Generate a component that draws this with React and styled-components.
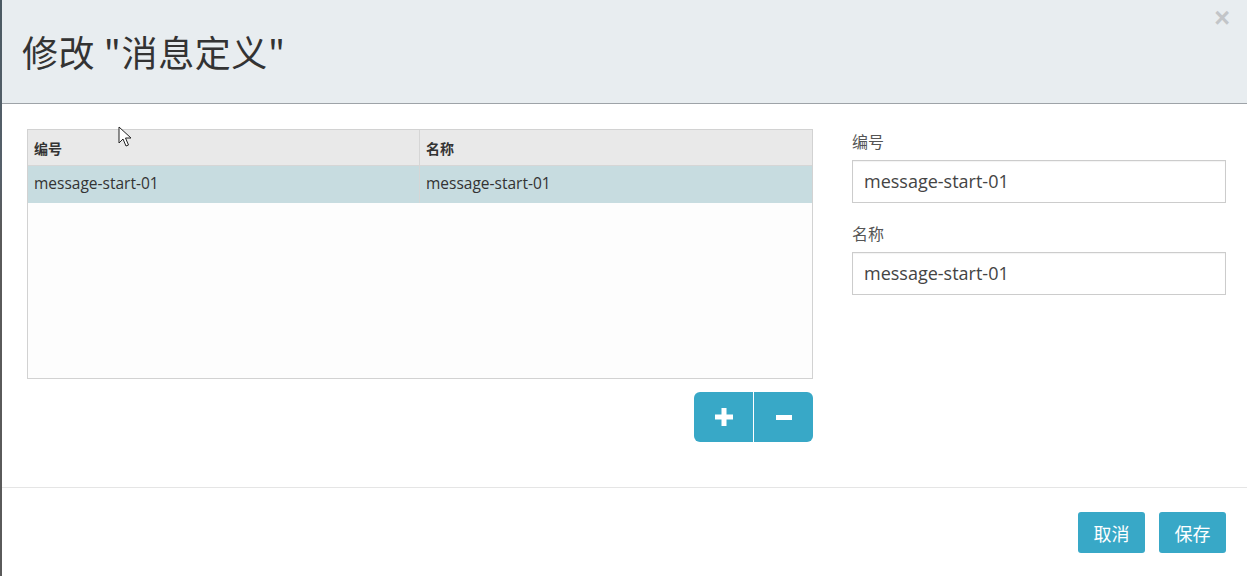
import React from 'react'
import styled, { createGlobalStyle } from 'styled-components'

const GlobalStyle = createGlobalStyle`
  html, body {
    margin: 0;
    padding: 0;
    background: #ffffff;
    overflow: hidden;
  }
  body {
    font-family: "Open Sans", "Noto Sans CJK SC", sans-serif;
  }
`

const Screen = styled.div`
  display: flex;
  width: 1247px;
  height: 576px;
  position: relative;
`

const Backdrop = styled.div`
  width: 2px;
  background: linear-gradient(#4b5a63 0%, #56606a 30%, #5a5a5a 40%);
`

const Modal = styled.div`
  flex: 1;
  display: flex;
  flex-direction: column;
  background: #ffffff;
`

const Header = styled.div`
  height: 104px;
  box-sizing: border-box;
  background: #e8edf0;
  border-bottom: 1px solid #9ea3a8;
  display: flex;
  justify-content: space-between;
  padding: 0 17px 0 20px;
`

const Title = styled.h1`
  margin: 0;
  align-self: center;
  font-family: "Noto Sans CJK SC", "Open Sans", sans-serif;
  font-weight: 400;
  font-size: 36px;
  letter-spacing: 0.6px;
  color: #333333;
  line-height: 1;
  padding-bottom: 2px;
`

const Close = styled.span`
  font-family: "Liberation Sans", sans-serif;
  font-size: 27px;
  font-weight: 700;
  color: #c2c5c8;
  line-height: 1;
  padding-top: 5px;
`

const Body = styled.div`
  height: 384px;
  box-sizing: border-box;
  padding: 25px 20px 0 25px;
  display: grid;
  grid-template-columns: 786px 374px;
  column-gap: 39px;
  align-items: start;
  border-bottom: 1px solid #e5e5e5;
`

const LeftCol = styled.div`
  display: flex;
  flex-direction: column;
`

const Grid = styled.div`
  height: 250px;
  box-sizing: border-box;
  border: 1px solid #d2d2d2;
  background: #fdfdfd;
`

const Row = styled.div`
  display: grid;
  grid-template-columns: 392px 1fr;
  height: ${p => (p.$head ? '35px' : '37px')};
  background: ${p => (p.$head ? '#e9e9e9' : p.$selected ? '#c7dce0' : 'transparent')};
  border-bottom: ${p => (p.$head ? '1px solid #d6d6d6' : 'none')};
`

const Cell = styled.div`
  display: flex;
  align-items: center;
  padding-left: 6px;
  padding-bottom: ${p => (p.$head ? '0' : '4px')};
  border-right: ${p => (p.$last ? 'none' : '1px solid #d6d6d6')};
  font-family: ${p => (p.$head ? '"Noto Sans CJK SC", sans-serif' : '"Open Sans", "Noto Sans CJK SC", sans-serif')};
  font-size: ${p => (p.$head ? '14px' : '15.5px')};
  font-weight: ${p => (p.$head ? 700 : 400)};
  color: #333333;
`

const BtnGroup = styled.div`
  display: flex;
  align-self: flex-end;
  margin-top: 13px;
  border-radius: 6px;
  overflow: hidden;
`

const IconBtn = styled.button`
  width: ${p => (p.$divided ? '60px' : '59px')};
  height: 50px;
  border: none;
  padding: 0;
  background: #38a8c7;
  border-left: ${p => (p.$divided ? '1px solid #ffffff' : 'none')};
  display: flex;
  align-items: center;
  justify-content: center;
`

const Form = styled.div`
  display: flex;
  flex-direction: column;
`

const Label = styled.label`
  font-family: "Noto Sans CJK SC", sans-serif;
  font-size: 16px;
  color: #555555;
  line-height: 24px;
  margin-top: ${p => (p.$first ? '0' : '18px')};
  margin-bottom: 7px;
`

const Input = styled.input`
  height: 43px;
  box-sizing: border-box;
  border: 1px solid #cccccc;
  padding: 0 11px 2px;
  font-family: "Open Sans", sans-serif;
  font-size: 18px;
  color: #444444;
  outline: none;
  box-shadow: inset 0 1px 1px rgba(0, 0, 0, 0.05);
`

const Footer = styled.div`
  display: flex;
  justify-content: flex-end;
  gap: 14px;
  padding: 24px 21px 0 0;
`

const ActionBtn = styled.button`
  width: 67px;
  height: 41px;
  border: none;
  border-radius: 3px;
  background: #38a8c7;
  color: #ffffff;
  font-family: "Noto Sans CJK SC", sans-serif;
  font-size: 18px;
  padding: 0;
`

const Cursor = styled.svg`
  position: absolute;
  left: 118px;
  top: 126px;
`

const rows = [{ code: 'message-start-01', name: 'message-start-01' }]

export default function App () {
  return (
    <Screen>
      <GlobalStyle />
      <Backdrop />
      <Modal>
        <Header>
          <Title>修改 "消息定义"</Title>
          <Close>×</Close>
        </Header>
        <Body>
          <LeftCol>
            <Grid>
              <Row $head>
                <Cell $head>编号</Cell>
                <Cell $head $last>名称</Cell>
              </Row>
              {rows.map((r, i) => (
                <Row key={i} $selected={i === 0}>
                  <Cell>{r.code}</Cell>
                  <Cell $last>{r.name}</Cell>
                </Row>
              ))}
            </Grid>
            <BtnGroup>
              <IconBtn>
                <svg width="18" height="18" viewBox="0 0 18 18">
                  <rect x="6.5" y="0" width="5" height="18" fill="#fff" />
                  <rect x="0" y="6.5" width="18" height="5" fill="#fff" />
                </svg>
              </IconBtn>
              <IconBtn $divided>
                <svg width="16" height="5" viewBox="0 0 16 5">
                  <rect x="0" y="0" width="16" height="5" fill="#fff" />
                </svg>
              </IconBtn>
            </BtnGroup>
          </LeftCol>
          <Form>
            <Label $first>编号</Label>
            <Input defaultValue="message-start-01" />
            <Label>名称</Label>
            <Input defaultValue="message-start-01" />
          </Form>
        </Body>
        <Footer>
          <ActionBtn>取消</ActionBtn>
          <ActionBtn>保存</ActionBtn>
        </Footer>
      </Modal>
      <Cursor width="14" height="22" viewBox="0 0 14 22">
        <path d="M1 1 L1 17 L5 13 L8 20 L10.5 19 L7.5 12 L13 12 Z" fill="#fff" stroke="#222" strokeWidth="1" strokeLinejoin="round" />
      </Cursor>
    </Screen>
  )
}
